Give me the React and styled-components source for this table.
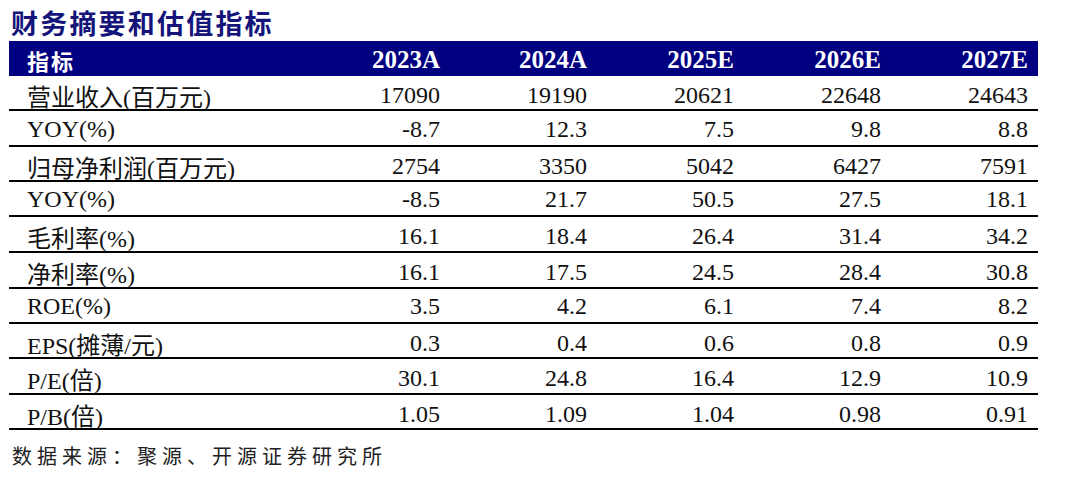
import styled, { createGlobalStyle } from 'styled-components';

const GlobalStyle = createGlobalStyle`
  body {
    margin: 0;
    background: #fff;
  }
`;

const columns = ['2023A', '2024A', '2025E', '2026E', '2027E'];

// row heights follow the ruled lines of the source table
const rows = [
  { h: 35, cells: ['营业收入(百万元)', '17090', '19190', '20621', '22648', '24643'] },
  { h: 36, cells: ['YOY(%)', '-8.7', '12.3', '7.5', '9.8', '8.8'] },
  { h: 35, cells: ['归母净利润(百万元)', '2754', '3350', '5042', '6427', '7591'] },
  { h: 35, cells: ['YOY(%)', '-8.5', '21.7', '50.5', '27.5', '18.1'] },
  { h: 36, cells: ['毛利率(%)', '16.1', '18.4', '26.4', '31.4', '34.2'] },
  { h: 36, cells: ['净利率(%)', '16.1', '17.5', '24.5', '28.4', '30.8'] },
  { h: 35, cells: ['ROE(%)', '3.5', '4.2', '6.1', '7.4', '8.2'] },
  { h: 35, cells: ['EPS(摊薄/元)', '0.3', '0.4', '0.6', '0.8', '0.9'] },
  { h: 36, cells: ['P/E(倍)', '30.1', '24.8', '16.4', '12.9', '10.9'] },
  { h: 35, cells: ['P/B(倍)', '1.05', '1.09', '1.04', '0.98', '0.91'] },
];

function App() {
  return (
    <Page>
      <GlobalStyle />
      <Title>财务摘要和估值指标</Title>
      <Table>
        <HeadRow $h={35}>
          <LabelCell $head>指标</LabelCell>
          {columns.map(c => (
            <NumCell key={c} $head>{c}</NumCell>
          ))}
        </HeadRow>
        {rows.map((r, i) => (
          <Row key={i} $h={r.h}>
            <LabelCell>{r.cells[0]}</LabelCell>
            {r.cells.slice(1).map((v, j) => (
              <NumCell key={j}>{v}</NumCell>
            ))}
          </Row>
        ))}
      </Table>
      <Source>数据来源：聚源、开源证券研究所</Source>
    </Page>
  );
}
export default App;

const Page = styled.div`
  width: 1080px;
  height: 481px;
  padding: 8px 0 0 9px;
  box-sizing: border-box;
  font-family: "Liberation Serif", "Noto Sans CJK SC", serif;
  overflow: hidden;
`;

const Title = styled.div`
  font-family: "Noto Sans CJK SC", sans-serif;
  font-weight: 700;
  font-size: 27px;
  line-height: 30px;
  letter-spacing: 2.2px;
  color: #14147a;
  padding-left: 2px;
  height: 33px;
`;

const Table = styled.div`
  width: 1029px;
  display: flex;
  flex-direction: column;
`;

const Row = styled.div`
  display: grid;
  grid-template-columns: 293px repeat(5, 147px);
  height: ${p => p.$h}px;
  align-items: center;
  border-bottom: 2px solid #000;
  box-sizing: border-box;
`;

const HeadRow = styled(Row)`
  background: #000080;
  border-bottom: none;
`;

const LabelCell = styled.div`
  padding-left: 18px;
  font-family: ${p => p.$head ? '"Noto Sans CJK SC", sans-serif' : '"Liberation Serif", "Noto Sans CJK SC", serif'};
  font-size: ${p => p.$head ? '22px' : '24px'};
  font-weight: ${p => p.$head ? 700 : 400};
  letter-spacing: ${p => p.$head ? '2px' : '0'};
  color: ${p => p.$head ? '#fff' : '#111'};
  white-space: nowrap;
  margin-top: 2px;
`;

const NumCell = styled.div`
  text-align: right;
  padding-right: 9px;
  font-size: ${p => p.$head ? '25px' : '24px'};
  font-weight: ${p => p.$head ? 700 : 400};
  color: ${p => p.$head ? '#fff' : '#111'};
  margin-top: 2px;
`;

const Source = styled.div`
  font-family: "Noto Sans CJK SC", sans-serif;
  font-size: 20px;
  letter-spacing: 5px;
  color: #222;
  padding: 11px 0 0 3px;
`;
